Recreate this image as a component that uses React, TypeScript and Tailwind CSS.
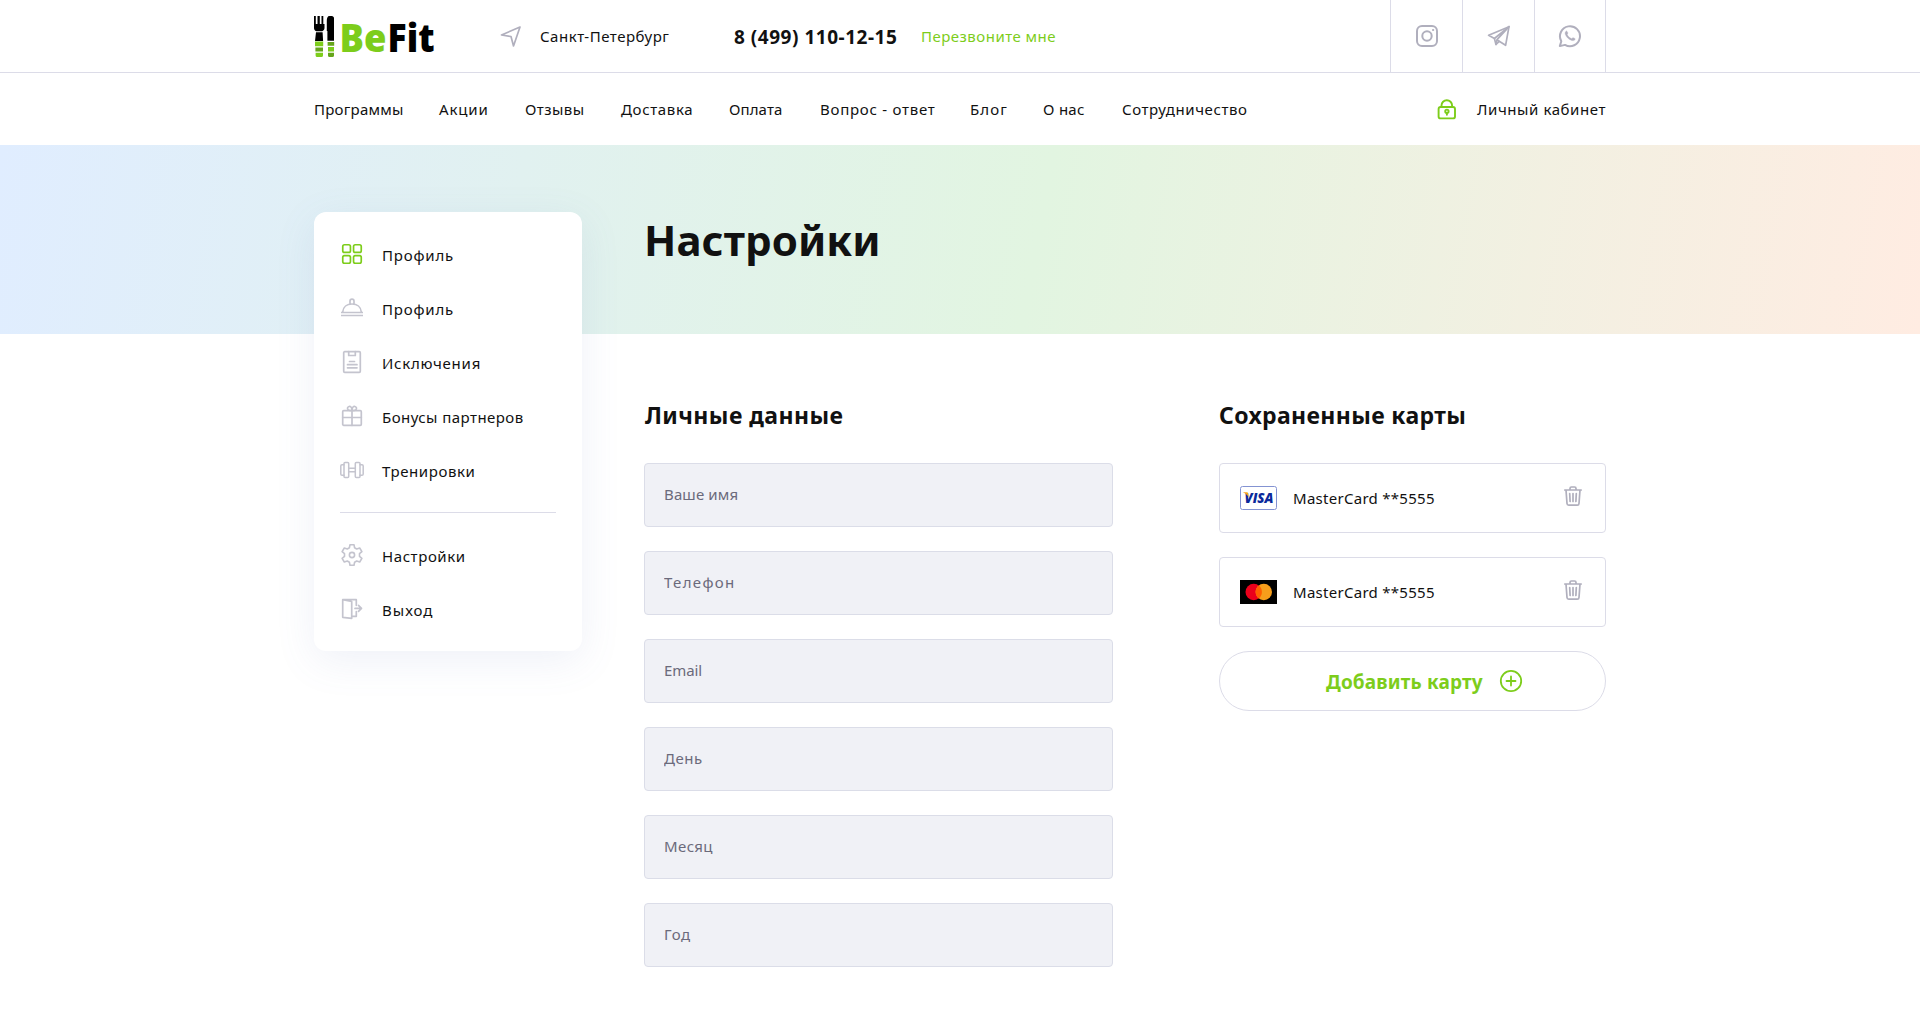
import type { ReactNode } from "react";

const Logo = () => (
  <div className="relative flex h-[72px] w-[120px] shrink-0 items-center">
    <svg width="21" height="42" viewBox="0 0 21 42" className="relative top-px block shrink-0">
      <path fill="#000" d="M0 0h1.8v8h1.7V0h2.3v8h1.7V0H9.300v8H10.500V12c0 1.800-1.200 2.700-2.300 3.200H2.300C.8 14.700 0 13.500 0 12zM2 16.300h6.600l.5 8.700H1zM15.500 0h2.300C19 0 20 1 20 2.200V24.800h-6.600V15h-.6V5c0-3 .7-5 2.700-5z" />
      <path fill="#7dcd1b" d="M1 25.600h8.200v4.600H1zM1.600 36.800h7.400v2.600q0 1.600-1.600 1.600H3.200q-1.600 0-1.600-1.600zM14 31h6v4.600h-6z" />
      <path fill="#65a51a" d="M1.400 31.400h7.600v4.200H1.400zM13.600 26h6.600v3.800h-6.600zM14 36.800h6v2.600q0 1.600-1.600 1.600h-2.800q-1.600 0-1.600-1.600z" />
    </svg>
    <svg width="100" height="60" viewBox="0 0 100 60" className="relative top-px block shrink-0" fontFamily="'Open Sans', 'Noto Sans', sans-serif" fontWeight="800" fontSize="38.500">
      <text x="4.500" y="45" textLength="47" lengthAdjust="spacingAndGlyphs" fill="#7dcd1b">Be</text>
      <text x="52.500" y="45" textLength="47" lengthAdjust="spacingAndGlyphs" fill="#000">Fit</text>
    </svg>
  </div>
);

const Svg = ({ w = 24, h = 24, sw = 1.7, children }: { w?: number; h?: number; sw?: number; children: ReactNode }) => (
  <svg width={w} height={h} viewBox={`0 0 ${w} ${h}`} fill="none" stroke="currentColor" strokeWidth={sw} strokeLinejoin="round" strokeLinecap="round" className="block shrink-0">
    {children}
  </svg>
);

const Location = () => <Svg><path d="M21 3 2.5 11l9.5 1.500L14.500 22z" /></Svg>;
const Instagram = () => (
  <Svg sw={2}>
    <rect x="2" y="2" width="20" height="20" rx="5" />
    <circle cx="12" cy="12" r="4.700" />
    <circle cx="18" cy="6" r=".6" fill="currentColor" strokeWidth="1" />
  </Svg>
);
const Telegram = () => (
  <Svg>
    <path d="M22 2.700 1.600 11.300l5.800 3.200L9 20.500l3.200-3.200 6.400 4z" />
    <path d="M22 2.700 7.400 14.500M22 2.700 10 15.600l2.200 1.700M10 15.600 9 20.500" />
  </Svg>
);
const Whatsapp = () => (
  <Svg sw={2}>
    <path d="M3.300 17.200A10 10 0 1 1 7 20.900l-5.200 1.200z" />
    <path d="M8.200 7.300c.8-.4 1.100.3 1.600 1.600.3.800-.8 1.200-.6 1.700.8 1.800 2.300 3.200 4.200 4 .6.300 1.100-1.200 1.800-.9 1.200.5 2.500 1 1.900 1.800-.9 1.200-2 1.300-3.300.9-3.200-1-5.500-3.200-6.500-6.100-.4-1.200-.1-2.500.9-3z" fill="currentColor" strokeWidth=".4" />
  </Svg>
);
const Lock = () => (
  <Svg sw={1.900}>
    <rect x="3.600" y="10" width="16.400" height="11.400" rx="2" />
    <path d="M6.500 9.700V8.500a5.300 5.300 0 0 1 10.600 0v1.200" />
    <circle cx="11.900" cy="14.300" r="1.700" />
    <path d="M11.900 16.200v1.600" />
  </Svg>
);
const Grid = () => (
  <Svg>
    <rect x="2.750" y="2.750" width="7.700" height="7.700" rx="1.700" />
    <rect x="13.550" y="2.750" width="7.700" height="7.700" rx="1.700" />
    <rect x="2.750" y="13.550" width="7.700" height="7.700" rx="1.700" />
    <rect x="13.550" y="13.550" width="7.700" height="7.700" rx="1.700" />
  </Svg>
);
const Dish = () => (
  <Svg>
    <path d="M2.700 16c.4-5 4.300-8 9.300-8s8.900 3 9.300 8M10 7.700V5.200a2 2 0 0 1 4 0v2.500" />
    <path d="M1 16.500h22M1 19.500h22" strokeLinecap="butt" />
  </Svg>
);
const Clipboard = () => (
  <Svg>
    <rect x="3.700" y="1.700" width="16.600" height="20.600" rx="1" />
    <path d="M8.700 1.700v3.800h6.600V1.700M9.500 11.500h5M7.500 14.700h9.500M7.500 17.800h9.500" />
  </Svg>
);
const Gift = () => (
  <Svg>
    <rect x="2.700" y="6.700" width="18.600" height="14.600" rx="1" />
    <path d="M12 6.700v14.600M2.700 13.500h18.600M12 6.700C8 6.700 7.200 5.300 7.600 3.800S10 2 11 3s1 2.500 1 3.700c0-1.200 0-2.700 1-3.700s3-.7 3.400.8-.4 2.900-4.400 2.900" />
  </Svg>
);
const Dumbbell = () => (
  <Svg sw={1.500}>
    <rect x="4" y="4.600" width="4.700" height="14.800" rx="1" />
    <rect x="15.300" y="4.600" width="4.700" height="14.800" rx="1" />
    <path d="M8.700 10.300h6.600M8.700 13.700h6.600M4 6.700H2Q.8 6.700.8 8v8q0 1.300 1.200 1.300h2M20 6.700h2q1.200 0 1.200 1.300v8q0 1.300-1.200 1.300h-2" />
  </Svg>
);
const Gear = () => (
  <Svg sw={1.600}>
    <path d="M10 1.700h4l.6 3.100 2.100 1.200 3-1 2.200 3.600-2.400 2v2.800l2.400 2-2.200 3.600-3-1-2.100 1.200-.6 3.100h-4l-.6-3.100L7.300 18l-3 1-2.200-3.600 2.400-2v-2.800l-2.400-2L4.300 5l3 1 2.100-1.200z" />
    <circle cx="12" cy="12" r="2.600" />
  </Svg>
);
const Exit = () => (
  <Svg>
    <path d="M2.700 2.700h13.600v5.600M2.700 2.700v17.600l9 1V4.500zM16.300 14.500v4.800h-4.300M15 11.400h6.300M18.500 8.400l3 3-3 3" />
  </Svg>
);
const Trash = () => (
  <Svg>
    <path d="M3.800 6h16.400M5 6l1 13.500q.1 1.700 1.700 1.700h8.600q1.600 0 1.700-1.700L19 6M9 5.800V4.400q0-1.400 1.400-1.400h3.200Q15 3 15 4.400v1.400M8.700 9.500l.4 8M12 9.500v8M15.300 9.500l-.4 8" />
  </Svg>
);
const Plus = () => (
  <Svg sw={1.800}>
    <circle cx="12" cy="12" r="10.200" />
    <path d="M12 7.500v9M7.500 12h9" />
  </Svg>
);
const Visa = () => (
  <svg width="37" height="24" viewBox="0 0 37 24" className="block shrink-0">
    <rect x=".5" y=".5" width="36" height="23" rx="2" fill="#fff" stroke="#8493d2" />
    <text x="4.500" y="17" fontFamily="'Open Sans', sans-serif" fontWeight="800" fontStyle="italic" fontSize="14.500" textLength="29" lengthAdjust="spacingAndGlyphs" fill="#0a2a9b">VISA</text>
    <path d="M2.800 6.300h4.100q1 0 1.200 1l.9 4.500C7.800 9 5.500 7.500 2.800 6.300z" fill="#f7a51c" />
  </svg>
);
const Mastercard = () => (
  <svg width="37" height="24" viewBox="0 0 37 24" className="block shrink-0">
    <path fill="#000" d="M0 0h37v24H0z" />
    <circle cx="13.700" cy="12" r="8.200" fill="#eb001b" />
    <circle cx="23.800" cy="12" r="8.200" fill="#f79e1b" />
    <path d="M18.750 5.540a8.200 8.200 0 0 1 0 12.920a8.200 8.200 0 0 1 0-12.920z" fill="#ff5f00" />
  </svg>
);

const nav = [
  ["Программы", "w-[125px] tracking-[0.24px]"],
  ["Акции", "w-[86px] tracking-[0.87px]"],
  ["Отзывы", "w-24 tracking-[0.43px]"],
  ["Доставка", "w-[108px] tracking-[0.66px]"],
  ["Оплата", "w-[91px] tracking-[0.1px]"],
  ["Вопрос - ответ", "w-[150px] tracking-[0.74px]"],
  ["Блог", "w-[73px] tracking-[1.12px]"],
  ["О нас", "w-[79px] tracking-[0.28px]"],
  ["Сотрудничество", "tracking-[0.58px]"],
];

const Item = ({ icon, label, track, active }: { icon: ReactNode; label: string; track: string; active?: boolean }) => (
  <a className="flex h-[54px] items-center gap-[18px]">
    <span className={`mb-0.5 ${active ? "text-[#7dcd1b]" : "text-[#c4c4ce]"}`}>{icon}</span>
    <span className={`mb-px ${track}`}>{label}</span>
  </a>
);

const fields = [
  ["Ваше имя", "placeholder:tracking-[0.14px]"],
  ["Телефон", "placeholder:tracking-[1.33px]"],
  ["Email", "placeholder:tracking-[-0.1px]"],
  ["День", "placeholder:tracking-[0.5px]"],
  ["Месяц", "placeholder:tracking-[0.4px]"],
  ["Год", "placeholder:tracking-[0.6px]"],
];

const Card = ({ logo }: { logo: ReactNode }) => (
  <div className="flex h-[70px] items-center rounded-[4px] border border-[#dcdce8] px-5">
    {logo}
    <span className="ml-4 tracking-[0.28px]">MasterCard **5555</span>
    <span className="mb-1 ml-auto text-[#b0afbd]"><Trash /></span>
  </div>
);

const social = [<Instagram />, <Telegram />, <Whatsapp />];

export default function App() {
  return (
    <div className="h-[1024px] overflow-hidden bg-white font-['Noto_Sans',sans-serif] text-[15px] leading-6 text-[#111]">
      <header>
        <div className="h-[73px] border-b border-[#dcdce8]">
          <div className="mx-auto flex h-full w-[1292px] items-center">
            <Logo />
            <div className="ml-[65px] flex w-[235px] items-center gap-[17px]">
              <span className="text-[#b0afbd]"><Location /></span>
              <span className="tracking-[0.51px]">Санкт-Петербург</span>
            </div>
            <b className="mt-0.5 w-[187px] text-[19px] tracking-[0.52px]">8 (499) 110-12-15</b>
            <a className="tracking-[0.48px] text-[#7dcd1b]">Перезвоните мне</a>
            <div className="ml-auto flex h-full border-r border-[#dcdce8] text-[#b0afbd]">
              {social.map((icon, i) => (
                <a key={i} className={`flex h-full items-center justify-center border-l border-[#dcdce8] ${i === 2 ? "w-[71px]" : "w-[72px]"}`}>{icon}</a>
              ))}
            </div>
          </div>
        </div>
        <div className="mx-auto flex h-[72px] w-[1292px] items-center">
          <nav className="flex">
            {nav.map(([label, cls]) => <a key={label} className={cls}>{label}</a>)}
          </nav>
          <a className="ml-auto flex items-center gap-[18px]">
            <span className="text-[#7dcd1b]"><Lock /></span>
            <span className="tracking-[0.57px]">Личный кабинет</span>
          </a>
        </div>
      </header>
      <div className="h-[189px] bg-[linear-gradient(100deg,#e0edff_0%,#e2f5e1_54%,#ffece2_100%)]">
        <div className="mx-auto flex w-[1292px] items-start">
          <aside className="mt-[67px] h-[439px] w-[268px] shrink-0 rounded-xl bg-white px-[26px] py-4 shadow-[0_10px_40px_rgba(95,115,190,0.1)]">
            <Item icon={<Grid />} label="Профиль" track="tracking-[0.8px]" active />
            <Item icon={<Dish />} label="Профиль" track="tracking-[0.8px]" />
            <Item icon={<Clipboard />} label="Исключения" track="tracking-[0.74px]" />
            <Item icon={<Gift />} label="Бонусы партнеров" track="tracking-[0.44px]" />
            <Item icon={<Dumbbell />} label="Тренировки" track="tracking-[0.58px]" />
            <div className="mt-3.5 mb-4 h-px bg-[#dcdce8]" />
            <Item icon={<Gear />} label="Настройки" track="tracking-[0.58px]" />
            <Item icon={<Exit />} label="Выход" track="tracking-[1px]" />
          </aside>
          <main className="ml-[62px] flex-1">
            <h1 className="flex h-[189px] items-center text-[42px] leading-none font-bold tracking-[0.1px]">Настройки</h1>
            <div className="flex items-start justify-between pt-[65px]">
              <section className="w-[469px]">
                <h2 className="mb-8 pl-px text-[23px] leading-8 font-bold tracking-[0.44px]">Личные данные</h2>
                <div className="flex flex-col gap-6">
                  {fields.map(([label, cls]) => (
                    <input key={label} placeholder={label} className={`h-16 w-full rounded-[4px] border border-[#dbdde8] bg-[#f0f1f6] px-[19px] pb-0.5 placeholder:text-[#6b6a7b] ${cls}`} />
                  ))}
                </div>
              </section>
              <section className="w-[387px]">
                <h2 className="mb-8 text-[23px] leading-8 font-bold tracking-[0.36px]">Сохраненные карты</h2>
                <div className="flex flex-col gap-6">
                  <Card logo={<Visa />} />
                  <Card logo={<Mastercard />} />
                  <button className="flex h-[60px] items-center rounded-full border border-[#dcdce8] pl-[106px] text-[19px] font-bold tracking-[0.15px] text-[#7dcd1b]">
                    <span className="mt-0.5 w-[173px] text-left">Добавить карту</span>
                    <Plus />
                  </button>
                </div>
              </section>
            </div>
          </main>
        </div>
      </div>
    </div>
  );
}
